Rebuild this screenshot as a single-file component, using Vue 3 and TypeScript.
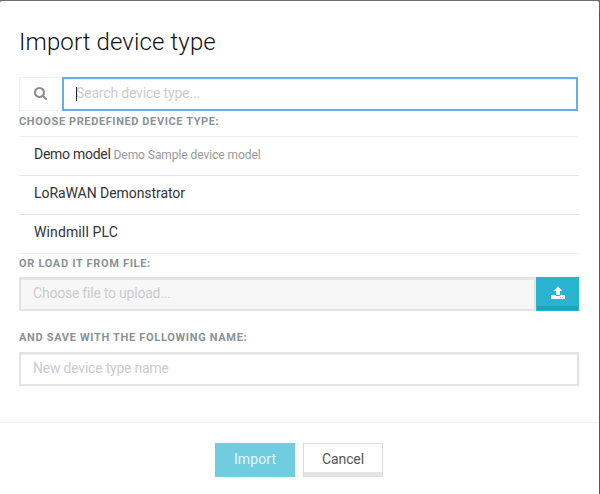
<script setup lang="ts">
import { ref } from 'vue'

interface DeviceType {
  name: string
  description?: string
}

const deviceTypes: DeviceType[] = [
  { name: 'Demo model', description: 'Demo Sample device model' },
  { name: 'LoRaWAN Demonstrator' },
  { name: 'Windmill PLC' },
]

const search = ref('')
const fileName = ref('')
const typeName = ref('')
</script>

<template>
  <div class="backdrop">
    <section class="modal">
      <div class="body">
        <h1 class="title">Import device type</h1>

        <div class="search-group">
          <span class="addon">
            <svg width="13" height="14" viewBox="0 0 1664 1792">
              <path fill="currentColor" d="M1152 832q0-185-131.500-316.500t-316.500-131.500-316.500 131.500-131.500 316.500 131.500 316.500 316.500 131.500 316.500-131.500 131.500-316.500zM1664 1664q0 52-38 90t-90 38q-54 0-90-38l-343-342q-179 124-399 124-143 0-273.500-55.500t-225-150-150-225-55.500-273.500 55.500-273.500 150-225 225-150 273.500-55.500 273.500 55.500 225 150 150 225 55.500 273.500q0 220-124 399l343 343q37 37 37 90z" />
            </svg>
          </span>
          <div class="search-field">
            <input v-model="search" class="field focused" type="text" placeholder="Search device type..." />
            <i v-if="!search" class="caret"></i>
          </div>
        </div>

        <p class="label choose">Choose predefined device type:</p>
        <ul class="list">
          <li v-for="(item, i) in deviceTypes" :key="item.name" class="item" :class="'row-' + i">
            <span class="name">{{ item.name }}</span>
            <small v-if="item.description" class="desc">{{ item.description }}</small>
          </li>
        </ul>

        <p class="label load">Or load it from file:</p>
        <div class="file-group">
          <input v-model="fileName" class="field file" type="text" readonly placeholder="Choose file to upload..." />
          <button class="upload" type="button" aria-label="Upload">
            <svg width="14" height="14" viewBox="0 0 14 14">
              <path fill="#fff" d="M7 0.300L11.300 5H9V9H5.200V5H2.700Z" />
              <path fill="#fff" d="M0.700 9H4.500Q5 10 6 10H8.200Q9.200 10 9.700 9H13.300Q14 9 14 9.700V12.300Q14 13 13.300 13H.7Q0 13 0 12.300V9.700Q0 9 .7 9Z" />
              <path fill="#7fd0e0" d="M9 11h1v1H9zM11 11h1v1h-1z" />
            </svg>
          </button>
        </div>

        <p class="label save">And save with the following name:</p>
        <input v-model="typeName" class="field new-name" type="text" placeholder="New device type name" />
      </div>

      <footer class="footer">
        <button class="btn primary" type="button">Import</button>
        <button class="btn cancel" type="button">Cancel</button>
      </footer>
    </section>
  </div>
</template>

<style>
body {
  margin: 0;
  background: #555;
}
</style>

<style scoped>
* {
  box-sizing: border-box;
}

.backdrop {
  width: 600px;
  height: 494px;
  padding: 1px 1px 0 0;
  overflow: hidden;
  background: linear-gradient(#707070, #555 14px);
  font-family: Roboto, 'Liberation Sans', sans-serif;
  font-size: 14px;
  color: #333;
}

.modal {
  height: 493px;
  background: #fff;
  border-radius: 2px 2px 0 0;
}

.body {
  height: 421px;
  padding: 25px 20px 0 19px;
}

.title {
  height: 32px;
  margin: 0 0 19px;
  font-size: 24px;
  font-weight: 300;
  line-height: 32px;
  letter-spacing: 0.12px;
  color: #111;
}

.search-group,
.file-group {
  display: flex;
  height: 34px;
}

.search-group {
  padding-right: 1px;
}

.addon {
  display: flex;
  align-items: center;
  justify-content: center;
  width: 43px;
  padding: 0 2px 2px 0;
  border: 1px solid #f0f0f0;
  border-right: 0;
  color: #868e90;
}

.search-field {
  position: relative;
  flex: 1;
}

.caret {
  position: absolute;
  top: 10px;
  left: 14px;
  width: 1px;
  height: 14px;
  background: #223;
}

.field {
  display: block;
  width: 100%;
  height: 34px;
  margin: 0;
  padding: 0 12px 2px;
  border: 2px solid #e4e4e4;
  border-radius: 0;
  outline: none;
  background: #fff;
  box-shadow: inset 0 1px 1px rgba(0, 0, 0, 0.075);
  font: inherit;
  letter-spacing: -0.22px;
  color: #333;
}

.field::placeholder {
  color: #ccc;
  opacity: 1;
}

.focused {
  border-color: #66afe9;
  letter-spacing: -0.18px;
}

.file {
  flex: 1;
  width: auto;
  min-width: 0;
  background: #f7f7f7;
}

.label {
  height: 14px;
  margin: 0;
  font-size: 11px;
  font-weight: 700;
  line-height: 14px;
  letter-spacing: 0.68px;
  text-transform: uppercase;
  color: #899395;
}

.choose {
  margin: 4px 0 7px;
  letter-spacing: 0.6px;
}

.load {
  margin: 3px 0 6px;
}

.save {
  margin: 20px 0 7px;
}

.list {
  margin: 0;
  padding: 0;
  border-top: 1px solid #f0f0f0;
  list-style: none;
}

.item {
  display: flex;
  align-items: baseline;
  gap: 3px;
  height: 39px;
  padding: 0 15px;
  border-bottom: 1px solid #e5e5e5;
  line-height: 34px;
}

.item:last-child {
  border-bottom-color: #f0f0f0;
}

.row-0 .name {
  letter-spacing: -0.28px;
}

.row-1 .name {
  letter-spacing: -0.06px;
}

.row-2 .name {
  letter-spacing: 0.12px;
}

.desc {
  font-size: 12px;
  letter-spacing: -0.06px;
  color: #999;
}

.upload {
  display: flex;
  align-items: center;
  justify-content: center;
  width: 43px;
  height: 34px;
  padding: 0 0 2px;
  border: 1px solid #29b4d1;
  border-radius: 0;
  background: #29b4d1;
  box-shadow: inset 0 -4px 0 #22a1bb;
}

.footer {
  display: flex;
  justify-content: center;
  gap: 8px;
  height: 72px;
  padding: 20px 1px 0 0;
  border-top: 1px solid #eee;
}

.btn {
  width: 80px;
  height: 34px;
  padding: 0 0 2px;
  border: 1px solid #ddd;
  border-radius: 0;
  background: #fff;
  font: inherit;
  color: #555;
}

.primary {
  border-color: #70cddf;
  background: #70cddf;
  letter-spacing: 0.1px;
  color: #e3f6f9;
}

.cancel {
  box-shadow: inset 0 -4px 0 #e4e4e4;
  letter-spacing: -0.1px;
}
</style>
